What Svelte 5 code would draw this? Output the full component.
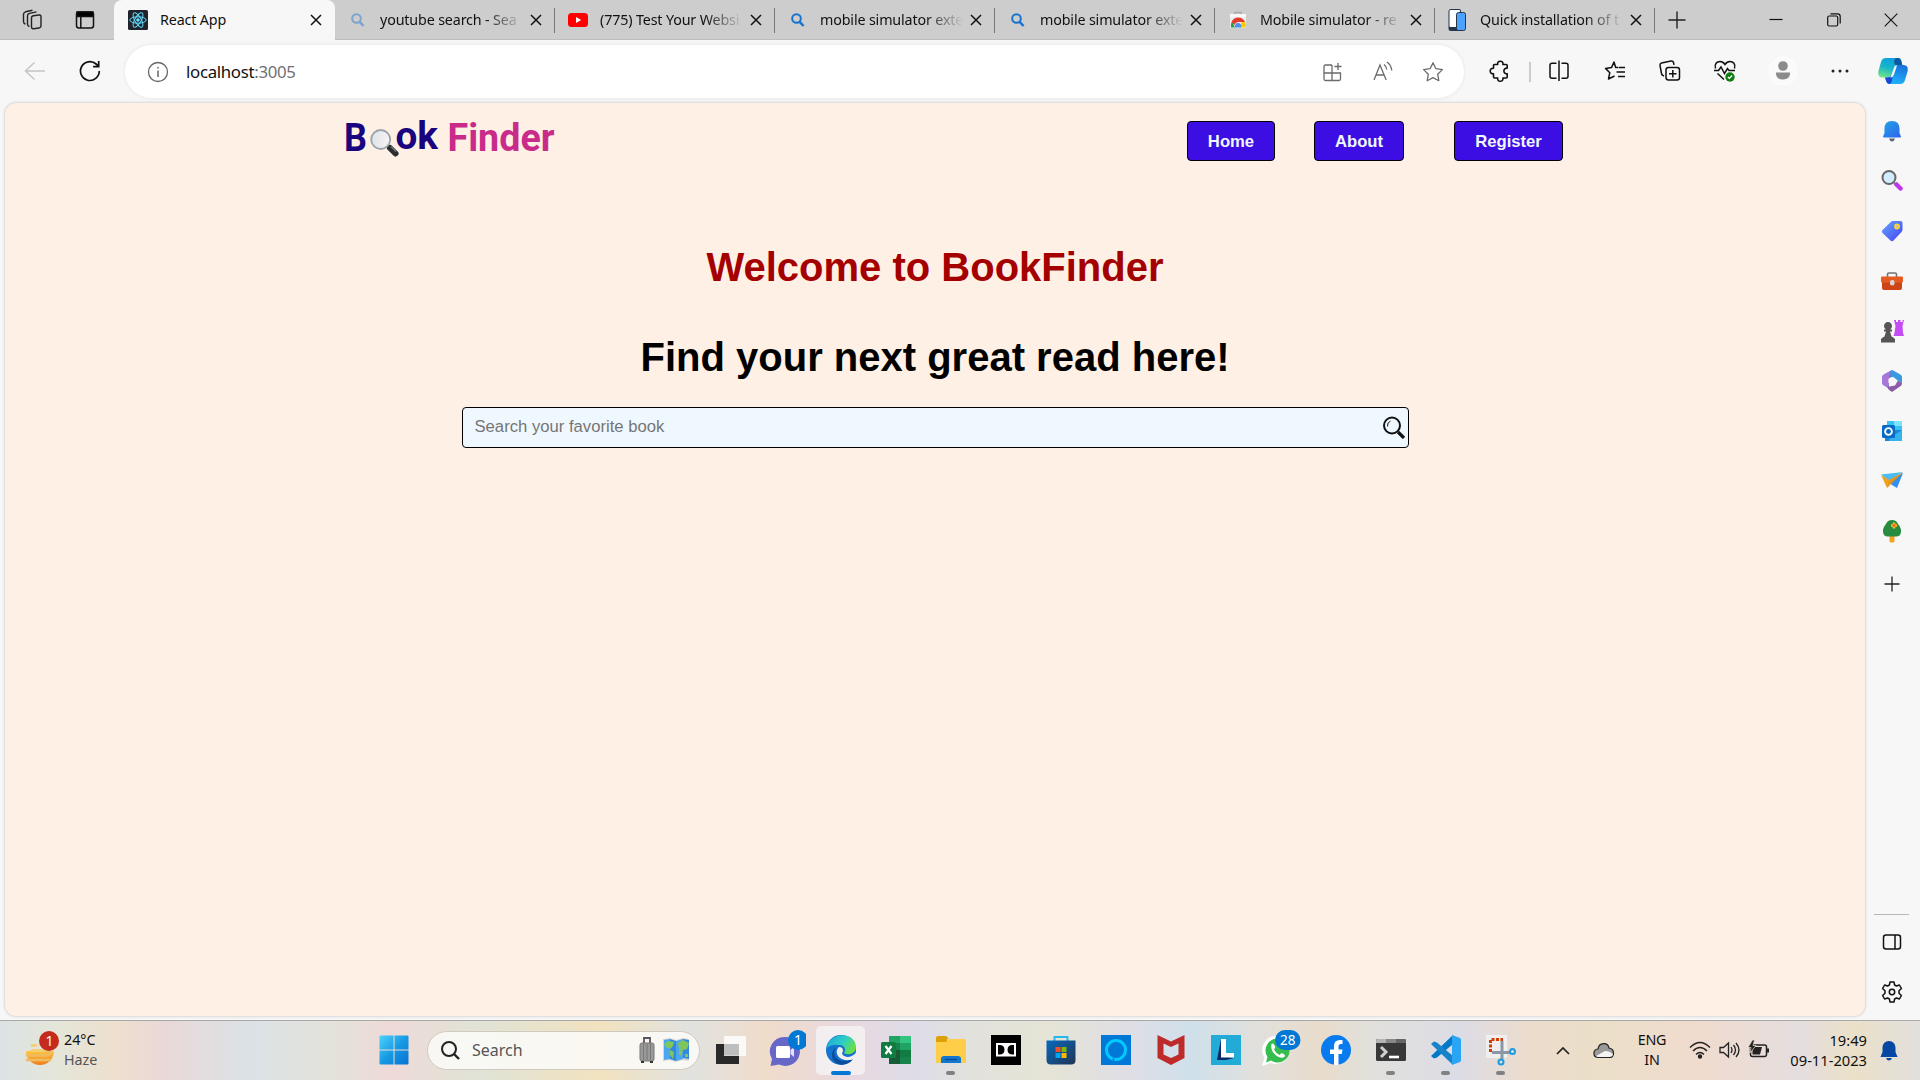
<script>
  const tabs = [
    { title: 'youtube search - Sea', icon: 'searchPale' },
    { title: '(775) Test Your Websi', icon: 'youtube' },
    { title: 'mobile simulator exte', icon: 'search' },
    { title: 'mobile simulator exte', icon: 'search' },
    { title: 'Mobile simulator - re', icon: 'store' },
    { title: 'Quick installation of t', icon: 'phone' }
  ];
  const nav = ['Home', 'About', 'Register'];
</script>

{#snippet close()}
  <svg class="x" width="12" height="12" viewBox="0 0 12 12"><path d="M1 1l10 10M11 1L1 11" fill="none" stroke="#111" stroke-width="1.5" /></svg>
{/snippet}

{#snippet favicon(name)}
  {#if name === 'youtube'}
    <svg width="20" height="20" viewBox="0 0 20 20"><rect y="3" width="20" height="14" rx="3.5" fill="#f00" /><path d="M8 7l5.2 3L8 13z" fill="#fff" /></svg>
  {:else if name === 'store'}
    <svg width="20" height="20" viewBox="0 0 20 20"><path d="M7 4V2.500h6V4" fill="none" stroke="#aaa" stroke-width="1.500" /><path d="M2 4h16v14H2z" fill="#eee" /><path d="M2 4h16v3H2z" fill="#f8f8f8" /><path d="M3 17.500a7 7 0 0 1 1-6l3 6z" fill="#1fa345" /><path d="M3.500 12a7.300 7.300 0 0 1 13.500 0h-7a4 4 0 0 0-3.500 3z" fill="#e33b2e" /><path d="M17 12a7 7 0 0 1 .5 5.500H12l1.500-5.500z" fill="#fc0" /><path d="M7 17.500a3.300 3.300 0 1 1 6.200 0z" fill="#4a90f0" /></svg>
  {:else if name === 'phone'}
    <svg class="phone" width="18" height="24" viewBox="0 0 18 24"><path d="M3 1h8q2 0 2 2v20H3q-2.500 0-2.500-2.500v-17Q.500 1 3 1z" fill="#25364a" /><rect x="1.500" y="2" width="10.500" height="17" rx="1" fill="#fff" /><rect x="8.500" y="4.500" width="9" height="18" rx="2" fill="#4ba3ff" stroke="#25364a" stroke-width="1" /></svg>
  {:else}
    <svg width="20" height="20" viewBox="0 0 20 20" class:pale={name === 'searchPale'}><circle cx="8.500" cy="8.500" r="4.300" fill="none" stroke="#1673cf" stroke-width="2" /><path d="M11.600 11.800l4 4.200" stroke="#1673cf" stroke-width="2.500" /></svg>
  {/if}
{/snippet}

<div class="screen">
  <header class="tabbar">
    <div class="tools">
      <svg width="24" height="24" viewBox="0 0 24 24" fill="none" stroke="#222" stroke-width="1.400"><rect x="10.500" y="7.500" width="9.500" height="13" rx="2" transform="skewY(-8) translate(0 2)" /><path d="M8.500 18.500c-1.500-.3-2-1-2-2.500V8c0-1.500.6-2.300 2-2.600l7-1.500" /><path d="M4.500 16c-1.500-.3-2-1-2-2.500V6.500c0-1.500.6-2.300 2-2.700l7-1.500" /></svg>
      <svg width="20" height="20" viewBox="0 0 20 20" fill="none" stroke="#111" stroke-width="1.500"><rect x="1.500" y="2" width="17" height="16" rx="2.500" /><path d="M2 2h16v4.500H2z" fill="#000" /><path d="M5.800 6v12" /></svg>
    </div>
    <div class="tab active">
      <svg width="20" height="20" viewBox="0 0 20 20" fill="none" stroke="#61dafb" stroke-width="1"><rect width="20" height="20" rx="1.500" fill="#20232a" stroke="none" /><ellipse cx="10" cy="10" rx="8.200" ry="3.200" /><ellipse cx="10" cy="10" rx="8.200" ry="3.200" transform="rotate(60 10 10)" /><ellipse cx="10" cy="10" rx="8.200" ry="3.200" transform="rotate(120 10 10)" /><circle cx="10" cy="10" r="1.300" fill="#61dafb" /></svg>
      <span class="title">React App</span>
      {@render close()}
    </div>
    {#each tabs as t}
      <div class="tab">
        {@render favicon(t.icon)}
        <span class="title fade">{t.title}</span>
        {@render close()}
      </div>
    {/each}
    <svg class="newtab" width="18" height="18" viewBox="0 0 18 18"><path d="M9 .500v17M.500 9h17" stroke="#222" stroke-width="1.400" /></svg>
    <div class="winctl">
      <svg width="14" height="14" viewBox="0 0 14 14"><path d="M.500 6.500h13" stroke="#111" stroke-width="1.200" /></svg>
      <svg width="14" height="14" viewBox="0 0 14 14" fill="none" stroke="#111" stroke-width="1.200"><rect x=".700" y="3" width="10" height="10" rx="1.500" /><path d="M3.500 .800h7c1.500 0 2.700 1.200 2.700 2.700v7" /></svg>
      <svg width="14" height="14" viewBox="0 0 14 14"><path d="M.700 .700l12.600 12.600M13.300 .700L.700 13.300" stroke="#111" stroke-width="1.100" /></svg>
    </div>
  </header>

  <div class="toolbar">
    <svg width="22" height="20" viewBox="0 0 22 20" fill="none" stroke="#c4c4c4" stroke-width="1.400"><path d="M21 10H1.500M10.500 1.500L1.500 10l9 8.500" /></svg>
    <svg width="22" height="22" viewBox="0 0 22 22" fill="none" stroke="#111" stroke-width="1.700"><path d="M20.300 11a9.400 9.400 0 1 1-3.200-7l2.400 2.200M19.700 1v5.600h-5.600" /></svg>
    <i></i>
    <div class="address">
      <svg class="info" width="22" height="22" viewBox="0 0 22 22" fill="none" stroke="#666" stroke-width="1.300"><circle cx="11" cy="11" r="9.500" /><path d="M11 9.500v6.500M11 6v1.600" stroke-width="1.500" /></svg>
      <span class="url">localhost<em>:3005</em></span>
      <svg width="22" height="22" viewBox="0 0 22 22" fill="none" stroke="#6b6b6b" stroke-width="1.300"><path d="M11 4H4.500Q3 4 3 5.500V18q0 1.500 1.500 1.500H18q1.500 0 1.500-1.500v-6H3M11 4v15.500M17 2v7M13.500 5.500h7" /></svg>
      <svg width="22" height="22" viewBox="0 0 22 22" fill="none" stroke="#6b6b6b" stroke-width="1.300"><path d="M2 19L8 4l6.200 15M4 14h8M12 3.500c1.800 1.400 2.600 3 2.800 5M15 1c3 2.200 4.500 5 4.700 8.500" /></svg>
      <svg width="22" height="22" viewBox="0 0 22 22" fill="none" stroke="#6b6b6b" stroke-width="1.300" stroke-linejoin="round"><path d="M11 1.800l2.900 5.900 6.500.9-4.700 4.600 1.100 6.500-5.800-3.100-5.800 3.100 1.100-6.500-4.700-4.600 6.500-.9z" /></svg>
    </div>
    <i></i>
    <svg width="22" height="22" viewBox="0 0 22 22" fill="none" stroke="#111" stroke-width="1.600" stroke-linejoin="round"><path d="M5.500 4.500h3.200C8.300 2.300 9.500 1.200 11.300 1.200s3 1.100 2.600 3.300h3.300q1 0 1 1v2.700c-2-.3-3.300.9-3.300 2.800s1.300 3.100 3.300 2.800v3.200q0 1-1 1h-3.300c.4 2.200-.8 3.200-2.600 3.200s-3-1-2.600-3.200H5.500q-1 0-1-1v-3.200C2.300 14 1.200 12.800 1.200 11s1.300-3 3.300-2.800V5.500q0-1 1-1z" /></svg>
    <b class="rule"></b>
    <svg width="22" height="22" viewBox="0 0 22 22" fill="none" stroke="#111" stroke-width="1.500"><path d="M8.500 3.200H4Q2 3.200 2 5.200v11q0 2 2 2h4.500M13.500 3.200H18q2 0 2 2v11q0 2-2 2h-4.500M11 .500v20.500" /></svg>
    <svg width="22" height="22" viewBox="0 0 22 22" fill="none" stroke="#111" stroke-width="1.500" stroke-linejoin="round"><path d="M14 7.500h-2.300L10 2 7.500 7.600l-6 .8 4.300 4.300-1.300 6.300 6-3M14.500 7.500H21M12.500 12H21M14 16.500h7" /></svg>
    <svg width="24" height="24" viewBox="0 0 24 24" fill="none" stroke="#111" stroke-width="1.500"><rect x="8" y="8.500" width="13.500" height="12.500" rx="2.500" /><path d="M14.800 11v7.500M11 14.800h7.500M6 17l-1.500-.8Q3.700 15.500 3.500 14.500L2 6.500Q1.800 4.500 3.500 4l9.500-2q2-.3 2.500 1.500l.5 2.300" /></svg>
    <svg width="24" height="24" viewBox="0 0 24 24" fill="none" stroke="#111" stroke-width="1.500"><path d="M2.500 9.500C1 5 4 2.500 7 2.500c2.500 0 4 1.500 5 3 1-1.500 2.500-3 5-3 3 0 6 2.500 4.500 7M1 11.500h4.500l2.500-3.500 3.500 6.500 3-5 1.500 2H22M4.500 14.500L11 20.500" /><circle cx="17" cy="18" r="4.700" fill="#107c10" stroke="none" /><path d="M14.900 18l1.500 1.500 2.700-3" stroke="#fff" stroke-width="1.200" /></svg>
    <svg width="30" height="30" viewBox="0 0 30 30"><circle cx="15" cy="15" r="14" fill="#fafafa" stroke="#fff" /><circle cx="15" cy="10" r="4.800" fill="#8b8b8b" /><path d="M8 16.500h14q.5 7-7 7t-7-7z" fill="#8b8b8b" /></svg>
    <svg width="20" height="6" viewBox="0 0 20 6" fill="#222"><circle cx="3" cy="3" r="1.500" /><circle cx="10" cy="3" r="1.500" /><circle cx="17" cy="3" r="1.500" /></svg>
    <svg width="32" height="28" viewBox="0 0 32 28">
      <defs>
        <linearGradient id="cpa" x1=".6" y1="0" x2=".3" y2="1"><stop offset="0" stop-color="#0f9fdc" /><stop offset=".5" stop-color="#16b5c9" /><stop offset="1" stop-color="#6fe48a" /></linearGradient>
        <linearGradient id="cpb" x1=".7" y1="0" x2=".4" y2="1"><stop offset="0" stop-color="#1a6fdc" /><stop offset="1" stop-color="#1fb4fa" /></linearGradient>
      </defs>
      <path d="M9 1h12q2.500 0 3.300 3l1 4h-4.300q-3 0-4 3l-2.500 7q-1 2.500-4 2.500H5.500q-5 0-4.200-6L4 5q1-4 5-4z" fill="url(#cpa)" />
      <path d="M19.500 1H21q2.500 0 3.300 3l1 4H19q-3-2-1.500-5 .7-2 2-2z" fill="#0c5aa0" />
      <path d="M23 27H12.500q-2.500 0-3.300-3L8 20.500h2.500q3 0 4-2.500L17 11q1-3 4-3h5.500q5 0 4.200 6L28 23q-1 4-5 4z" fill="url(#cpb)" />
      <path d="M8 20.500h2.500q2.500 0 3.500-2 2 2.500 1 5.500-.8 3-2.500 3-2.500 0-3.300-3z" fill="#1c47d4" />
      <path d="M17.500 9.500q1-1 2.500-1l-3.200 9.500q-1 2.500-4 2.500 1-.8 1.700-2.500z" fill="#f4faff" />
    </svg>
  </div>

  <main>
    <section class="page">
      <div class="pagehead">
        <svg class="logo" width="212" height="44" viewBox="0 0 212 44">
          <defs><linearGradient id="lens" x1="0" x2="1"><stop stop-color="#dfe3ea" /><stop offset="1" stop-color="#f8f4f3" /></linearGradient></defs>
          <g font-family="Roboto" font-weight="700" font-size="38">
            <text x="0" y="34" fill="#19037f" textLength="23" lengthAdjust="spacingAndGlyphs">B</text>
            <text x="51.500" y="32" fill="#19037f" textLength="42.500" lengthAdjust="spacingAndGlyphs">ok</text>
            <text x="103.500" y="34" fill="#c82b89" textLength="107" lengthAdjust="spacingAndGlyphs">Finder</text>
          </g>
          <path d="M43 28l3 3" stroke="#777" stroke-width="2.500" /><path d="M46 31l5.500 5.500" stroke="#2b2d2f" stroke-width="6" stroke-linecap="round" /><path d="M47 29.500l5 5" stroke="#74797d" stroke-width="1.200" />
          <circle cx="36.700" cy="22.500" r="9.500" fill="url(#lens)" stroke="#9ba3ab" stroke-width="1.800" />
        </svg>
        <nav>
          {#each nav as n}<button class={n.toLowerCase()}>{n}</button>{/each}
        </nav>
      </div>
      <h1 class="welcome">Welcome to BookFinder</h1>
      <h1>Find your next great read here!</h1>
      <div class="search">
        <input type="text" placeholder="Search your favorite book" />
        <svg width="24" height="24" viewBox="0 0 24 24" fill="none" stroke="#111"><circle cx="10" cy="10.500" r="8" stroke-width="2" /><path d="M5.500 11.500Q5 7.500 8.500 6" stroke-width="1" /><path d="M16 17l6 6" stroke-width="3.200" /></svg>
      </div>
    </section>

    <aside>
      <svg width="22" height="22" viewBox="0 0 22 22"><defs><linearGradient id="bl" x1="0" y1="0" x2="1" y2="1"><stop stop-color="#20a4e8" /><stop offset="1" stop-color="#2f63ea" /></linearGradient></defs><path d="M8 18.500h6q-1 3-3 3t-3-3z" fill="#5c6670" /><path d="M11 1c5 0 7.500 3 7.500 7.500V13l1.500 3.500q0 1-1 1H3q-1 0-1-1L3.500 13V8.500C3.500 4 6 1 11 1z" fill="url(#bl)" /></svg>
      <svg width="22" height="22" viewBox="0 0 22 22"><path d="M13 13l2 2" stroke="#777" stroke-width="2" /><path d="M15.500 14.500l4 4" stroke="#bf36f0" stroke-width="4.500" stroke-linecap="round" /><circle cx="8" cy="7.500" r="6.500" fill="#d0edff" stroke="#666" stroke-width="2" /></svg>
      <svg width="22" height="22" viewBox="0 0 22 22"><defs><linearGradient id="tg" x1="0" y1="0" x2="1" y2="1"><stop stop-color="#64a7ff" /><stop offset="1" stop-color="#4540f0" /></linearGradient></defs><path d="M12 1h7.500q2 0 2 2V9.500q0 1.500-1 2.500l-8 8.500q-1.500 1.500-3 0l-8-7.500q-1.500-1.500 0-3l8-7.800q1-1.200 2.500-1.200z" fill="url(#tg)" /><circle cx="16" cy="6.500" r="2.200" fill="#c5bcc8" stroke="#ffd528" stroke-width="1.500" /></svg>
      <svg width="24" height="20" viewBox="0 0 24 20"><path d="M7.500 6V3.500Q7.500 2 9 2h6q1.500 0 1.500 1.500V6" fill="none" stroke="#737373" stroke-width="1.600" /><path d="M2 8h20v9q0 2-2 2H4q-2 0-2-2z" fill="#ce4515" /><rect x="1" y="5.500" width="22" height="6" rx="1" fill="#e55c22" /><rect x="10" y="9" width="4.500" height="5.500" rx="2" fill="#d6d6d6" /></svg>
      <svg width="24" height="24" viewBox="0 0 24 24"><path d="M14 1h2v2h2V1h2.500v2h2V1H24l-1.500 6 .5 7 1 3H13.500l1-3 1-7z" fill="#c44bf5" /><path d="M1 20q1-1.500 3.500-2.500l1.500-5H4v-2h2a4 4 0 1 1 4 0h2v2h-2l1.500 5Q14 18.500 15 20v3.500H1z" fill="#555" /></svg>
      <svg width="22" height="24" viewBox="0 0 22 24"><path d="M11 1l8 4.500q2 1 2 3V13l-8-6-5 3v9l-5-2.500q-2-1-2-3V8.500q0-2 2-3z" fill="#5b7fe0" /><path d="M12 1.500l7 4q2 1 2 3V14l-5-3-5-4-2-4z" fill="#389bdd" /><path d="M1 8.500q0-2 2-3L10 1.500 8 6v9l-1 4-4-2.500q-2-1-2-3z" fill="#a878d7" /><path d="M6 18l8-1.500 3-5 4 2.500v.5q0 2-2 3L11 23q-3-1-5-5z" fill="#8c5ca9" /><circle cx="11" cy="12" r="3.700" fill="#f7f7f7" /></svg>
      <svg width="22" height="22" viewBox="0 0 22 22"><path d="M6 1h15v10H6z" fill="#39c3f4" /><path d="M13 1h8v5h-8z" fill="#7be4ff" /><path d="M4 10h17v11H4z" fill="#1887d8" /><path d="M10 17l11-7v11H8z" fill="#35b3ef" /><rect x="1" y="5" width="13" height="13" rx="1.500" fill="#086ac5" /><circle cx="7.500" cy="11.500" r="3.400" fill="none" stroke="#fff" stroke-width="1.900" /></svg>
      <svg width="24" height="22" viewBox="0 0 24 22"><path d="M1 4.500L23 2 9 11z" fill="#4bbdf2" /><path d="M8 11L23 3l-6 15-5-3z" fill="#2f90f5" /><path d="M1 5l8 5 14-7.500L11 13l-4 5z" fill="#f0a21c" /><path d="M9 10L23 2.500 12 14l-5 4z" fill="#e08a10" opacity=".5" /></svg>
      <svg width="22" height="24" viewBox="0 0 22 24"><path d="M8.500 17h5v5.500q0 1-2.500 1t-2.500-1z" fill="#f2a31a" /><path d="M11 1q4.500 0 6 4 3.500 4 3 8-.5 4.500-5 4.500H7Q2.500 17.500 2 13q-.5-4 3-8 1.500-4 6-4z" fill="#288c40" /><path d="M13 3.500v6M10 6.500h6" stroke="#ffb72c" stroke-width="2.500" /><circle cx="13" cy="6.500" r="1.200" fill="#f05a15" /></svg>
      <svg class="add" width="16" height="16" viewBox="0 0 16 16"><path d="M8 .500v15M.500 8h15" stroke="#222" stroke-width="1.300" /></svg>
      <hr />
      <svg width="20" height="18" viewBox="0 0 20 18" fill="none" stroke="#111" stroke-width="1.500"><rect x="1.500" y="2" width="17" height="14" rx="2.500" /><path d="M13 2v14" /></svg>
      <svg width="24" height="24" viewBox="0 0 24 24" fill="none" stroke="#111" stroke-width="1.500" stroke-linejoin="round"><path d="M10 2h4l.6 3 1.800 1 3-1 2 3.500-2.400 2.200v2.600l2.400 2.200-2 3.500-3-1-1.800 1L14 22h-4l-.6-3-1.800-1-3 1-2-3.500L5 13.300v-2.600L2.600 8.500l2-3.500 3 1 1.800-1z" /><circle cx="12" cy="12" r="2.700" /></svg>
    </aside>
  </main>

  <footer>
    <div class="weather">
      <svg width="36" height="38" viewBox="0 0 36 38"><defs><linearGradient id="sun" x1="0" y1="0" x2="0" y2="1"><stop stop-color="#ffc73f" /><stop offset="1" stop-color="#ef7d1d" /></linearGradient></defs><path d="M2 21h28a14 14 0 0 1-28 0z" fill="url(#sun)" /><path d="M8 15.500h4M8 20.500h12" fill="none" stroke="#f4cf74" stroke-width="3" stroke-linecap="round" /><path d="M3 25.500h18q6 0 5-3-1-2-4-1M3 30h23" fill="none" stroke="#efbb62" stroke-width="2.600" stroke-linecap="round" /><circle cx="25" cy="11" r="10" fill="#c42b1c" /><text x="25.500" y="16" text-anchor="middle" fill="#fff" font-size="14">1</text></svg>
      <div><p>24°C</p><p class="dim">Haze</p></div>
    </div>
    <svg class="start" width="30" height="30" viewBox="0 0 30 30"><defs><linearGradient id="win" x1="0" y1="0" x2="1" y2="1"><stop stop-color="#4cd2fc" /><stop offset=".5" stop-color="#189ae3" /><stop offset="1" stop-color="#0671d2" /></linearGradient></defs><path d="M.500 1.500q0-1 1-1h13v14h-14zM15.500.500h13q1 0 1 1v13h-14zM.500 15.500h14v14h-13q-1 0-1-1zM15.500 15.500h14v13q0 1-1 1h-13z" fill="url(#win)" /></svg>
    <div class="find">
      <svg width="20" height="20" viewBox="0 0 20 20" fill="none" stroke="#222" stroke-width="2"><circle cx="9" cy="9" r="7" /><path d="M14 14l5 5" stroke-width="2.400" /></svg>
      <span>Search</span>
      <svg width="18" height="28" viewBox="0 0 18 28"><path d="M6 9V2h6v7" fill="none" stroke="#5c5360" stroke-width="1.800" /><rect x="2" y="7" width="14" height="18" rx="2" fill="#9a9a9a" stroke="#777" /><path d="M5.500 8v16M9 8v16M12.500 8v16" stroke="#777" /><path d="M3 26h3M12 26h3" stroke="#333" stroke-width="2" /></svg>
      <svg width="28" height="26" viewBox="0 0 28 26"><path d="M1 2l7-1 6 2 7-2 6 1v22l-7-1-6 2-7-2-6 1z" fill="#d9d5cc" /><path d="M2 3l6-1v20l-6 1zM14 4l7-2v20l-7 2z" fill="#4ba7f0" /><path d="M8 2l6 2v20l-6-2zM21 2l6 1v19l-6-1z" fill="#3389df" /><path d="M2 7l4-3 6 1-1 4-3 3-4-2zM8 13l4 2-1 7-3-4zM16 6l5-3 6 3-2 6-4 1-4-2zM17 12l4 1-2 6-2-2zM23 17h3v3h-3z" fill="#80c65a" /></svg>
    </div>
    <div class="apps">
      <div class="app"><svg width="32" height="30" viewBox="0 0 32 30"><path d="M1 9h23v20H1z" fill="#292929" /><rect x="9" y="1" width="22" height="20" fill="#fff" opacity=".8" /><path d="M9 9h15v11H9z" fill="#bebebe" /></svg></div>
      <div class="app"><svg width="40" height="42" viewBox="0 0 40 42"><path d="M19 8a14.500 14.500 0 1 1-6 27.500L4.500 37l1.500-7A14.500 14.500 0 0 1 19 8z" fill="#6767c8" /><rect x="10" y="17" width="14" height="12" rx="1.500" fill="#fff" /><path d="M24.500 21l3.500-3v10l-3.500-3z" fill="#e4e1ff" /><circle cx="32" cy="11" r="10" fill="#0078d4" /><text x="32" y="16" text-anchor="middle" fill="#fff" font-size="14">1</text></svg></div>
      <div class="app current"><svg width="30" height="30" viewBox="0 0 30 30"><defs><linearGradient id="eg" x1="0" x2="1" y1="0" y2=".5"><stop stop-color="#16a6e0" /><stop offset=".6" stop-color="#31cfc2" /><stop offset="1" stop-color="#66df48" /></linearGradient></defs><circle cx="15" cy="15" r="15" fill="#1473ce" /><path d="M1 12C4-3 29-4 30 12c0 6-7 9-12 6 3-4 0-8-5-8Q5 9 1 13z" fill="url(#eg)" /><path d="M10 13c-5 7 2 17 17 11-6 9-21 7-21-4 0-3 1-6 4-7z" fill="#0b4e9e" /><path d="M13 12q4 0 4 4-3 4 4 6 4 .5 9-4l2 5-4 1C13 29 7 17 13 12z" fill="#f3eef0" /></svg><i></i></div>
      <div class="app"><svg width="30" height="28" viewBox="0 0 30 28"><path d="M8 0h22v28H8z" fill="#18834a" /><path d="M8 0h11v7H8z" fill="#21a366" /><path d="M19 0h11v7H19z" fill="#33c481" /><path d="M19 7h11v7H19z" fill="#21a366" /><path d="M19 14h11v7H19z" fill="#107c41" /><path d="M8 14h11v14H8z" fill="#185c37" /><rect y="6" width="15" height="16" rx="1.500" fill="#107c41" /><path d="M4.500 10l6 8M10.500 10l-6 8" stroke="#fff" stroke-width="2.200" /></svg></div>
      <div class="app"><svg width="30" height="28" viewBox="0 0 30 28"><path d="M0 2q0-2 2-2h8l3 3h-2v7H0z" fill="#dda007" /><path d="M0 6h10l3-3h15q2 0 2 2v22H0z" fill="#ffce48" /><path d="M5 27v-4q0-3 3-3h14q3 0 3 3v4z" fill="#1277cf" /><path d="M9 23.500h12" stroke="#0b4c90" stroke-width="1.300" /></svg><i></i></div>
      <div class="app"><svg width="30" height="30" viewBox="0 0 30 30"><path d="M0 0h30v30H0z" /><path d="M5 8h20v13.500H5z" fill="#fff" /><path d="M7 10h1.500q5 0 5 4.700t-5 4.800H7zM23 10h-1.500q-5 0-5 4.700t5 4.800H23z" /></svg></div>
      <div class="app"><svg width="30" height="30" viewBox="0 0 30 30"><defs><linearGradient id="st" x1="0" y1="0" x2="1" y2="1"><stop stop-color="#0869bb" /><stop offset="1" stop-color="#213456" /></linearGradient></defs><path d="M8.500 6V2h13v4" fill="none" stroke="#28b8ee" stroke-width="2" /><path d="M.500 5.500h29V25q0 4.500-4.500 4.500H5Q.500 29.500.500 25z" fill="url(#st)" /><path d="M9.500 12h5v5h-5z" fill="#f25022" /><path d="M15.500 12h5v5h-5z" fill="#7fba00" /><path d="M9.500 18h5v5h-5z" fill="#00a4ef" /><path d="M15.500 18h5v5h-5z" fill="#ffb900" /></svg></div>
      <div class="app"><svg width="30" height="30" viewBox="0 0 30 30"><path d="M0 0h30v30H0z" fill="#0078d7" /><circle cx="15" cy="15" r="9.500" fill="none" stroke="#00caff" stroke-width="3" /><path d="M13.500 23.500l-.5 3-2-3z" fill="#0078d7" /></svg></div>
      <div class="app"><svg width="28" height="30" viewBox="0 0 28 30"><path d="M.500 0L14 6.500 27.500 0v23L14 30 .500 23zM6.500 8.500V19.500L14 23l7.500-3.500V8.500L14 12z" fill="#bd2b2b" fill-rule="evenodd" /></svg></div>
      <div class="app"><svg width="30" height="30" viewBox="0 0 30 30"><path d="M0 0h30v30H0z" fill="#23abd8" /><path d="M10 4L6 25h9l8-2-12-2z" fill="#0c2868" /><path d="M10 4h5v14h8v4.500H10z" fill="#fff" /></svg></div>
      <div class="app"><svg width="46" height="42" viewBox="0 0 46 42"><path d="M19 7a14 14 0 1 1-6.500 27L4 37l2.500-8.500A14 14 0 0 1 19 7z" fill="#fff" /><path d="M19 9.500a12 12 0 1 1-6 22l-5 2 1.500-5.500A12 12 0 0 1 19 9.500z" fill="#35bd4d" /><path d="M13.500 15c2-2 3.500 2 3.800 3.500L16 20.500q2 4 5.500 5.500l2-2q4 1.500 3.500 3c-2 5-16-2-13.500-12z" fill="#fff" /><rect x="17" y="1" width="25.500" height="20" rx="10" fill="#0078d4" /><text x="29.700" y="16" text-anchor="middle" fill="#fff" font-size="13.500">28</text></svg></div>
      <div class="app"><svg width="30" height="30" viewBox="0 0 30 30"><circle cx="15" cy="15" r="15" fill="#087bee" /><path d="M13 30V19H9v-4.500h4V11q0-6 6-6h2.500v4H20q-2.500 0-2.500 2.500v3h4l-.7 4.500h-3.300v11z" fill="#fff" /></svg></div>
      <div class="app"><svg width="30" height="24" viewBox="0 0 30 24"><rect x="0" y="1" width="30" height="22" rx="1.500" fill="#383838" /><path d="M0 2.500Q0 1 1.500 1H10v4H0z" fill="#b4b4b4" /><path d="M10 1h10v4H10z" fill="#888" /><path d="M20 1h8.500Q30 1 30 2.500V5H20z" fill="#666" /><path d="M5 9l5 5-5 5" fill="none" stroke="#d0d0d0" stroke-width="3" /><path d="M13 19h10" stroke="#fff" stroke-width="2.600" /></svg><i></i></div>
      <div class="app"><svg width="30" height="30" viewBox="0 0 30 30"><path d="M22 0v9L6 22.500l-3 1L0 21z" fill="#0079c9" /><path d="M22 30v-9L6 7.500l-3-1L0 9z" fill="#1683ca" /><path d="M21 0l8 3q1 .5 1 2v20q0 1.500-1 2l-8 3z" fill="#2aa4f4" /></svg><i></i></div>
      <div class="app"><svg width="30" height="32" viewBox="0 0 30 32"><path d="M0 1h21v23H0z" fill="#f0eeee" /><path d="M4.500 18V5.500H17" fill="none" stroke="#d83b01" stroke-width="3" stroke-dasharray="3 1.500" /><path d="M16 7v18M6 18.500h18" stroke="#8997a5" stroke-width="3" /><circle cx="15" cy="28" r="2.500" fill="none" stroke="#199ce0" stroke-width="2" /><circle cx="26.500" cy="17.500" r="2.500" fill="none" stroke="#199ce0" stroke-width="2" /></svg><i></i></div>
    </div>
    <div class="tray">
      <svg width="14" height="9" viewBox="0 0 14 9" fill="none" stroke="#222" stroke-width="1.700"><path d="M1 8l6-6 6 6" /></svg>
      <svg width="22" height="17" viewBox="0 0 22 17"><path d="M5.500 15.500c-6 0-6-8-.5-8.500C6 0 15 0 16 6c6 1 6 9.500 0 9.500z" fill="#999" stroke="#222" stroke-width="1.200" /><path d="M3 14l9-5q6 0 8 4-1 2-4 2H5z" fill="#f3f3f3" /></svg>
      <div class="lang"><p>ENG</p><p>IN</p></div>
      <svg width="22" height="18" viewBox="0 0 22 18" fill="none" stroke="#222" stroke-width="1.400"><path d="M1 6.500q10-10 20 0M4 10q7-7 14 0M7 13.500q4-4 8 0" /><circle cx="11" cy="15.500" r="1.500" fill="#222" /></svg>
      <svg width="22" height="18" viewBox="0 0 22 18" fill="none" stroke="#222" stroke-width="1.300"><path d="M1 6.500h3.500L9.500 2v14l-5-4.500H1zM12 6q2 3 0 6M14.500 4q4 5 0 10M17 2q6 7 0 14" /></svg>
      <svg width="22" height="20" viewBox="0 0 22 20"><rect x="2.500" y="5" width="16" height="11.500" rx="2" fill="none" stroke="#222" stroke-width="1.500" /><path d="M4.500 7H14l-2 7.500H4.500zM19 8.500h2v4h-2z" fill="#222" /><path d="M4.500 0L0 7.500h3L2 13l6-7.500H5L6.500 0z" fill="#222" stroke="#ecdfcd" stroke-width=".700" /></svg>
      <div class="clock"><p>19:49</p><p>09-11-2023</p></div>
      <svg width="18" height="21" viewBox="0 0 18 21" fill="#0748a3"><path d="M9 1c4 0 6.500 3 6.500 7v4L17.500 17H.500L2.500 12V8c0-4 2.500-7 6.500-7zM6 18h6q-1 2.500-3 2.500T6 18z" /></svg>
    </div>
  </footer>
</div>

<style>
  :global(body) { overflow: hidden; }
  .screen { width: 1920px; height: 1080px; display: flex; flex-direction: column; background: #f7f7f7; font-family: "Noto Sans", sans-serif; color: #111; overflow: hidden; }
  svg { display: block; flex: none; }
  p { margin: 0; }

  .tabbar { height: 40px; flex: none; display: flex; background: #cdcdcd; box-shadow: inset 0 -1px #bcbcbc; }
  .tools { width: 114px; box-sizing: border-box; padding-left: 21px; display: flex; align-items: center; gap: 30px; }
  .tab { width: 220px; height: 40px; box-sizing: border-box; display: flex; align-items: center; padding: 0 12.500px 0 14px; position: relative; font-size: 14.300px; letter-spacing: -.15px; }
  .tab:not(.active)::after { content: ""; position: absolute; right: -1px; top: 8px; width: 1px; height: 25px; background: #777; }
  .tab.active { background: #f7f7f7; border-radius: 8px 8px 0 0; width: 221px; padding-right: 13.500px; margin-right: -1px; }
  .title { width: 143px; margin-left: 12px; white-space: nowrap; line-height: 22px; }
  .fade { mask-image: linear-gradient(90deg, #000 105px, transparent 143px); }
  .x { margin-left: auto; }
  .phone { margin-right: 2px; }
  .pale { opacity: .45; }
  .newtab { align-self: center; margin-left: 14px; }
  .winctl { margin-left: auto; padding-right: 22px; display: flex; align-items: center; gap: 43.500px; }

  .toolbar { height: 63px; flex: none; display: grid; grid-template-columns: 70px 40px 15px 1339px 11px 50px 10px 48px 64px 46px 64px 52px 61px 46px; align-items: center; justify-items: center; }
  .toolbar > svg { margin-top: -1px; }
  .address { width: 1339px; height: 53px; border-radius: 27px; background: #fff; box-shadow: 0 0 4px rgba(0, 0, 0, .08); display: flex; align-items: center; gap: 28.500px; box-sizing: border-box; padding: 0 20px 0 21.500px; }
  .info { margin-right: -11px; }
  .url { margin-right: auto; font-size: 16.800px; letter-spacing: -.3px; line-height: 24px; }
  .url em { font-style: normal; color: #717171; }
  .rule { width: 2px; height: 20px; background: #ccc; }

  main { flex: 1; min-height: 0; display: flex; padding-left: 5px; }
  .page { width: 1860px; height: 913px; background: #fff0e5; border-radius: 11px; box-shadow: 0 0 3px rgba(0, 0, 0, .25); font-family: "Liberation Sans", Arial, sans-serif; display: flex; flex-direction: column; align-items: center; }
  .pagehead { align-self: stretch; display: flex; align-items: flex-start; padding: 14px 302px 0 339px; height: 123px; }
  .logo { overflow: visible; }
  nav { margin: 4px 0 0 auto; display: flex; }
  button { box-sizing: border-box; height: 40px; padding: 1px 0 0; border: 1px solid #000; border-radius: 4px; background: #3d0ee4; color: #f0f8ff; font: bold 16.670px "Liberation Sans", Arial, sans-serif; }
  .home { width: 88px; margin-right: 39px; }
  .about { width: 90px; margin-right: 50px; }
  .register { width: 109px; }
  h1 { margin: 0 0 27px; height: 46px; line-height: 46px; font-size: 40px; color: #000; }
  .welcome { color: #a50000; margin: 3.500px 0 44px; }
  .search { width: 947px; height: 41px; box-sizing: border-box; border: 1px solid #000; border-radius: 4px; background: #f0f8ff; display: flex; align-items: center; padding: 0 2px 0 12px; }
  input { flex: 1; border: 0; outline: 0; padding: 0; background: none; font: 16.670px "Liberation Sans", Arial, sans-serif; }
  input::placeholder { color: #757575; }

  aside { flex: 1; height: 914px; box-sizing: border-box; padding: 3px 2px 0 0; display: flex; flex-direction: column; align-items: center; }
  aside svg { box-sizing: content-box; height: 24px; padding: 13px 0; }
  aside .add { height: 16px; padding: 20px 0 17px; }
  hr { width: 35px; margin: auto 0 2px; border: 0; border-top: 1px solid #b7b7b7; }

  footer { height: 60px; flex: none; box-sizing: border-box; border-top: 1px solid #aaa8a7; padding-bottom: 1px; display: flex; align-items: center; background: linear-gradient(90deg, #dce3e5 0, #e5e6d8 60px, #eedfce 115px, #ead8d8 165px, #dbe2e6 250px, #e4e2da 330px, #eedad8 390px, #e0e3d6 480px, #f2e2bf 600px, #e1e2df 690px, #f0dccb 765px, #e8d8e0 850px, #dedce8 915px, #e2e2dc 975px, #e5e4d6 1050px, #dfdee6 1130px, #cfe0ea 1190px, #e2e0dc 1260px, #e8dccb 1320px, #e2e0dc 1370px, #dcdce6 1460px, #ecdccc 1530px, #ebdfc8 1600px, #f0dbce 1700px, #e4dedf 1800px, #ebe0c8 1850px, #e2e0dc 1920px); font-size: 14.300px; }
  .weather { width: 379px; display: flex; align-items: center; gap: 4px; padding-left: 24px; box-sizing: border-box; line-height: 20px; }
  .weather svg { margin-top: -3px; }
  .dim { color: #555; }
  .find { width: 273px; height: 39px; margin-left: 18px; box-sizing: border-box; border: 1px solid #d0c9bf; border-radius: 20px; background: rgba(252, 251, 249, .85); display: flex; align-items: center; padding: 0 9px 0 12px; }
  .find span { margin: 0 auto 0 12px; font-size: 16px; color: #555; line-height: 24px; }
  .find svg:last-child { margin-left: 6px; }
  .apps { display: flex; align-items: center; margin-left: 3px; }
  .app { width: 55px; height: 49px; display: flex; align-items: center; justify-content: center; position: relative; }
  .app i { position: absolute; bottom: 0; left: 23px; width: 9px; height: 4px; border-radius: 2px; background: #818181; }
  .current { width: 49px; margin: 0 3px; border-radius: 5px; background: #f3eef0; }
  .current i { left: 14.500px; width: 20px; background: #0078d4; }
  .tray { flex: none; display: grid; grid-template-columns: 40px 42px 54px 41px 19px 39px 92px 38px; align-items: center; justify-items: center; margin-left: 15px; line-height: 20px; }
  .lang { text-align: center; letter-spacing: -.2px; }
  .clock { text-align: right; font-size: 14.700px; justify-self: end; padding-right: 3px; }
</style>
